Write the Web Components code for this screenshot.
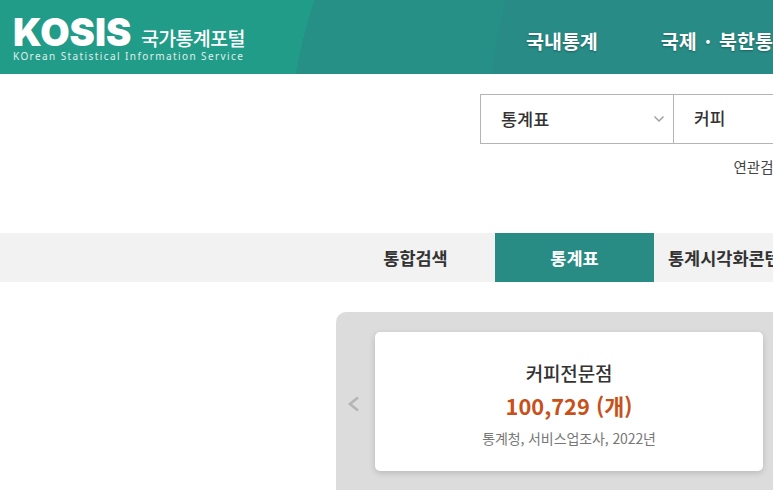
<!DOCTYPE html>
<html lang="ko"><head><meta charset="utf-8"><title>KOSIS</title>
<style>
html,body{margin:0;padding:0;width:773px;height:490px;overflow:hidden;background:#fff;font-family:"Noto Sans CJK KR","Noto Sans",sans-serif;color:#333}
</style></head><body>
<kosis-header></kosis-header>
<kosis-search></kosis-search>
<kosis-tabs></kosis-tabs>
<kosis-panel>
  <stat-card title-text="커피전문점" value="100,729 (개)" source="통계청, 서비스업조사, 2022년"></stat-card>
</kosis-panel>
<script>
const def=(name,html)=>customElements.define(name,class extends HTMLElement{
  constructor(){super();this.attachShadow({mode:'open'}).innerHTML=typeof html==='function'?html(this):html;}
});
def('kosis-header',`<style>
:host{display:flex;height:74px;width:1100px;position:relative;overflow:hidden;background:#288b85;color:#fff}
.bg{position:absolute;inset:0;width:100%;height:100%}
.logo{position:relative;width:480px;padding:16px 0 0 13px;box-sizing:border-box}
.top{display:flex;align-items:flex-end;height:34px}
.k{font:900 38px/35px Inter,sans-serif;width:128px;flex:none}
.n{font:500 19.5px/24px "Noto Sans CJK KR",sans-serif;letter-spacing:-.65px;white-space:nowrap}
.s{font:400 10px/13px "Noto Sans","Liberation Sans",sans-serif;letter-spacing:1.41px;white-space:nowrap;opacity:.85}
nav{position:relative;display:flex;gap:63px;padding-left:46px;align-items:center;font:700 19.5px/26px "Noto Sans CJK KR",sans-serif;white-space:nowrap;padding-top:8px;text-shadow:0 1px 2px rgba(0,0,0,.3)}
.dot{margin:0 8px}
</style>
<svg class="bg" viewBox="0 0 1100 74" preserveAspectRatio="none" aria-hidden="true">
<path d="M0 0H315C307 22 301 48 296 74H0Z" fill="#219c88"/>
<path d="M315 0H505L491 74H296C301 48 307 22 315 0Z" fill="#268f86"/>
</svg>
<div class="logo"><div class="top"><span class="k">KOSIS</span><span class="n">국가통계포털</span></div><div class="s">KOrean Statistical Information Service</div></div>
<nav><span>국내통계</span><span>국제<span class="dot">·</span>북한통계</span></nav>`);
def('kosis-search',`<style>
:host{display:block;height:159px;box-sizing:border-box;padding:20px 0 0 480px;width:1100px}
.box{display:flex;height:50px;width:700px;box-sizing:border-box;border:1px solid #b4b4b4;font:500 17.5px/46px "Noto Sans CJK KR",sans-serif;color:#333}
.sel{width:193px;box-sizing:border-box;padding-left:20px;border-right:1px solid #b4b4b4;display:flex;align-items:center;justify-content:space-between;padding-right:8px}
.q{padding-left:20px;font-size:17px}
.sel svg{display:block}
.rel{margin:13px 0 0 253.5px;font:400 14.5px/20px "Noto Sans CJK KR",sans-serif;color:#444;white-space:nowrap}
</style>
<div class="box"><div class="sel"><span>통계표</span><svg width="12" height="8" viewBox="0 0 12 8" aria-hidden="true"><path d="M1.5 1.5 6 6l4.5-4.5" fill="none" stroke="#a0a0a0" stroke-width="1.5"/></svg></div><div class="q">커피</div></div>
<div class="rel">연관검색어</div>`);
def('kosis-tabs',`<style>
:host{display:flex;height:49px;width:1100px;background:#f2f2f2;padding-left:336px;font:700 17.5px/50px "Noto Sans CJK KR",sans-serif;color:#333;white-space:nowrap}
span{display:block;text-align:center}
.a{width:159px;background:#288c85;color:#fff}
.b{width:159px}
.c{padding-left:14px}
</style><span class="b">통합검색</span><span class="a">통계표</span><span class="c">통계시각화콘텐츠</span>`);
def('kosis-panel',`<style>
:host{display:flex;align-items:flex-start;margin:30px 0 0 336px;width:700px;height:300px;background:#dcdcdc;border-radius:10px 0 0 0;box-sizing:border-box;padding:20px 0 0 0}
.arrow{width:39px;flex:none;display:flex;justify-content:center;padding-top:64px;box-sizing:border-box;padding-right:5px}
svg{display:block}
</style><div class="arrow"><svg width="13" height="16" viewBox="0 0 13 16" aria-hidden="true"><path d="M11 1.5 3 8l8 6.5" fill="none" stroke="#b5b5b5" stroke-width="2.6"/></svg></div><slot></slot>`);
def('stat-card',el=>`<style>
:host{display:block;width:388px;height:139px;box-sizing:border-box;background:#fff;border-radius:5px;box-shadow:0 2px 6px rgba(0,0,0,.16);text-align:center;padding-top:27px}
.t{font:500 19px/28px "Noto Sans CJK KR",sans-serif;color:#333;letter-spacing:-.2px}
.v{font:700 21.8px/30px "Noto Sans CJK KR",sans-serif;color:#c8501a;margin-top:4px}
.s{font:400 14px/20px "Noto Sans CJK KR",sans-serif;color:#777;margin-top:7px;letter-spacing:-.1px}
</style><div class="t">${el.getAttribute('title-text')||'커피전문점'}</div><div class="v">${el.getAttribute('value')||'100,729 (개)'}</div><div class="s">${el.getAttribute('source')||'통계청, 서비스업조사, 2022년'}</div>`);
</script>
</body></html>
